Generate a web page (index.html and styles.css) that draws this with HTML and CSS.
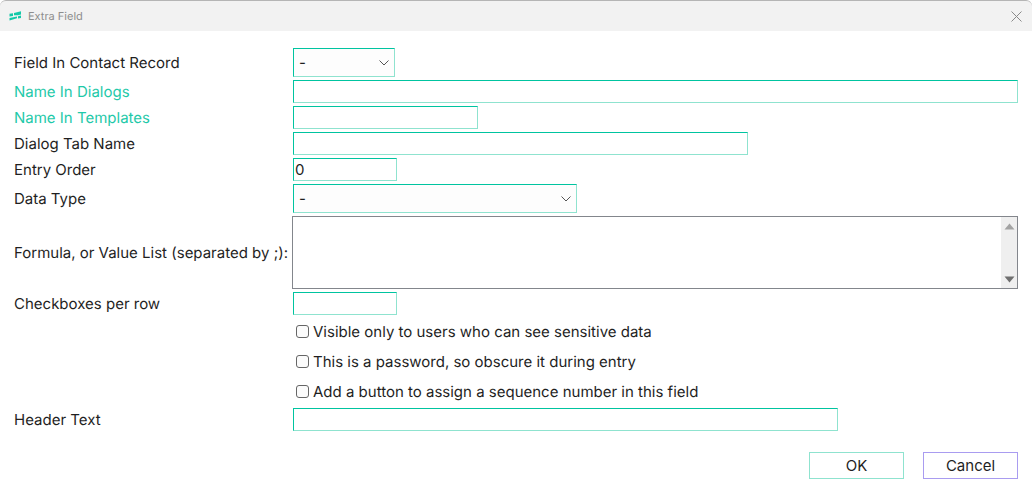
FILE: index.html
```html
<!DOCTYPE html>
<html lang="en">
<head>
    <meta charset="UTF-8">
    <meta name="viewport" content="width=device-width, initial-scale=1.0">
    <title>Extra Field</title>
    <link rel="stylesheet" href="styles.css">
</head>
<body>
    <div class="dialog">
        <div class="titlebar">
            <svg class="logo" width="13" height="10" viewBox="0 0 13 10">
                <path d="M5 2 L12 0.3 V3.4 L9 4.2 H5 Z" fill="#13c9a8"/>
                <path d="M0.5 2.8 L4 2.2 V5 L0.5 5.6 Z" fill="#13c9a8"/>
                <path d="M0.5 7 L8 5.4 V7.2 L0.5 9.4 Z" fill="#13c9a8"/>
                <path d="M9 5.2 L12 4.6 V7 L9 7.6 Z" fill="#13c9a8"/>
            </svg>
            <span class="title">Extra Field</span>
            <svg class="close" width="11" height="11" viewBox="0 0 11 11">
                <path d="M0.5 0.5 L10.5 10.5 M10.5 0.5 L0.5 10.5" stroke="#8a8a8a" stroke-width="1" fill="none"/>
            </svg>
        </div>

        <form class="form">
            <div class="row row-select-top">
                <label>Field In Contact Record</label>
                <div class="select select-small"><span>-</span>
                    <svg width="10" height="6" viewBox="0 0 10 6"><path d="M0.5 0.5 L5 5 L9.5 0.5" stroke="#555" fill="none"/></svg>
                </div>
            </div>
            <div class="row row-name">
                <label class="required">Name In Dialogs</label>
                <input type="text" class="input input-full">
            </div>
            <div class="row row-templates">
                <label class="required">Name In Templates</label>
                <input type="text" class="input input-templates">
            </div>
            <div class="row row-tab">
                <label>Dialog Tab Name</label>
                <input type="text" class="input input-tab">
            </div>
            <div class="row row-order">
                <label>Entry Order</label>
                <input type="text" class="input input-short" value="0">
            </div>
            <div class="row row-type">
                <label>Data Type</label>
                <div class="select select-wide"><span>-</span>
                    <svg width="10" height="6" viewBox="0 0 10 6"><path d="M0.5 0.5 L5 5 L9.5 0.5" stroke="#555" fill="none"/></svg>
                </div>
            </div>
            <div class="row row-formula">
                <label>Formula, or Value List (separated by ;):</label>
                <div class="textarea">
                    <div class="scrollbar">
                        <svg width="11" height="7" viewBox="0 0 11 7"><path d="M5.5 0.5 L10.5 6.5 H0.5 Z" fill="#a3a3a3"/></svg>
                        <svg width="11" height="7" viewBox="0 0 11 7"><path d="M0.5 0.5 H10.5 L5.5 6.5 Z" fill="#6f6f6f"/></svg>
                    </div>
                </div>
            </div>
            <div class="row row-per-row">
                <label>Checkboxes per row</label>
                <input type="text" class="input input-short">
            </div>
            <div class="checks">
                <label class="check"><input type="checkbox"> Visible only to users who can see sensitive data</label>
                <label class="check"><input type="checkbox"> This is a password, so obscure it during entry</label>
                <label class="check"><input type="checkbox"> Add a button to assign a sequence number in this field</label>
            </div>
            <div class="row row-header">
                <label>Header Text</label>
                <input type="text" class="input input-header">
            </div>
            <div class="buttons">
                <button type="button" class="btn btn-ok">OK</button>
                <button type="button" class="btn btn-cancel">Cancel</button>
            </div>
        </form>
    </div>
</body>
</html>
```
FILE: styles.css
```css
* {
    box-sizing: border-box;
}

html, body {
    margin: 0;
    padding: 0;
    height: 100%;
    overflow: hidden;
    background: #fff;
}

body {
    font-family: 'Inter', sans-serif;
    font-size: 15px;
    color: #1f1f1f;
    text-rendering: geometricPrecision;
}

.dialog {
    height: 481px;
}

.titlebar {
    display: flex;
    align-items: center;
    height: 31px;
    padding: 0 10px 0 9px;
    background: #f2f2f2;
    border-top: 1px solid #b5b5b5;
    border-radius: 6px 6px 0 0;
}

.logo {
    margin-right: 6px;
}

.title {
    font-size: 11px;
    color: #8e8e8e;
}

.close {
    margin-left: auto;
}

.form {
    padding: 17px 14px 0;
}

.row {
    display: grid;
    grid-template-columns: 279px 1fr;
    align-items: center;
}

.row label {
    line-height: 18px;
    white-space: nowrap;
}

.required {
    color: #1fc9a9;
}

.row-select-top { height: 29px; }
.row-name { height: 23px; margin-top: 3px; }
.row-templates { height: 23px; margin-top: 3px; }
.row-tab { height: 23px; margin-top: 3px; }
.row-order { height: 23px; margin-top: 3px; }
.row-type { height: 29px; margin-top: 3px; }
.row-formula { height: 73px; margin-top: 3px; }
.row-per-row { height: 23px; margin-top: 3px; }
.row-header { height: 23px; margin-top: 8px; }

.input,
.select {
    border: 1px solid #8fe3cf;
    border-top-color: #00c4a0;
    border-left-color: #00c4a0;
}

.input {
    display: block;
    height: 23px;
    padding: 0 1px;
    background: #fff;
    font-family: inherit;
    font-size: 15px;
    color: #1f1f1f;
    outline: none;
    border-radius: 0;
}

.input-full { width: 725px; }
.input-templates { width: 185px; }
.input-tab { width: 455px; }
.input-short { width: 104px; }
.input-header { width: 545px; }

.select {
    display: flex;
    align-items: center;
    justify-content: space-between;
    height: 29px;
    padding: 0 5px;
    background: #fdfdfd;
}

.select-small { width: 102px; }
.select-wide { width: 284px; }

.textarea {
    display: flex;
    justify-content: flex-end;
    width: 726px;
    height: 73px;
    margin-left: -1px;
    border: 1px solid #83868c;
    background: #fff;
}

.scrollbar {
    display: flex;
    flex-direction: column;
    justify-content: space-between;
    align-items: center;
    width: 16px;
    padding: 6px 0 5px;
    background: #efefef;
}

.checks {
    display: flex;
    flex-direction: column;
    gap: 12px;
    margin-top: 7px;
    padding-left: 282px;
}

.check {
    display: flex;
    align-items: center;
    gap: 4px;
    height: 18px;
}

.check input {
    appearance: none;
    width: 13px;
    height: 13px;
    margin: 0;
    border: 1px solid #666;
    border-radius: 3px;
    background: #fbfbfb;
}

.buttons {
    display: flex;
    justify-content: flex-end;
    gap: 19px;
    margin-top: 21px;
}

.btn {
    width: 95px;
    height: 27px;
    padding: 0;
    background: #fff;
    font-family: inherit;
    font-size: 15px;
    color: #1f1f1f;
    border: 1px solid #8fe3cf;
    border-radius: 0;
}

.btn-cancel {
    border-color: #a99cf0;
}
```
